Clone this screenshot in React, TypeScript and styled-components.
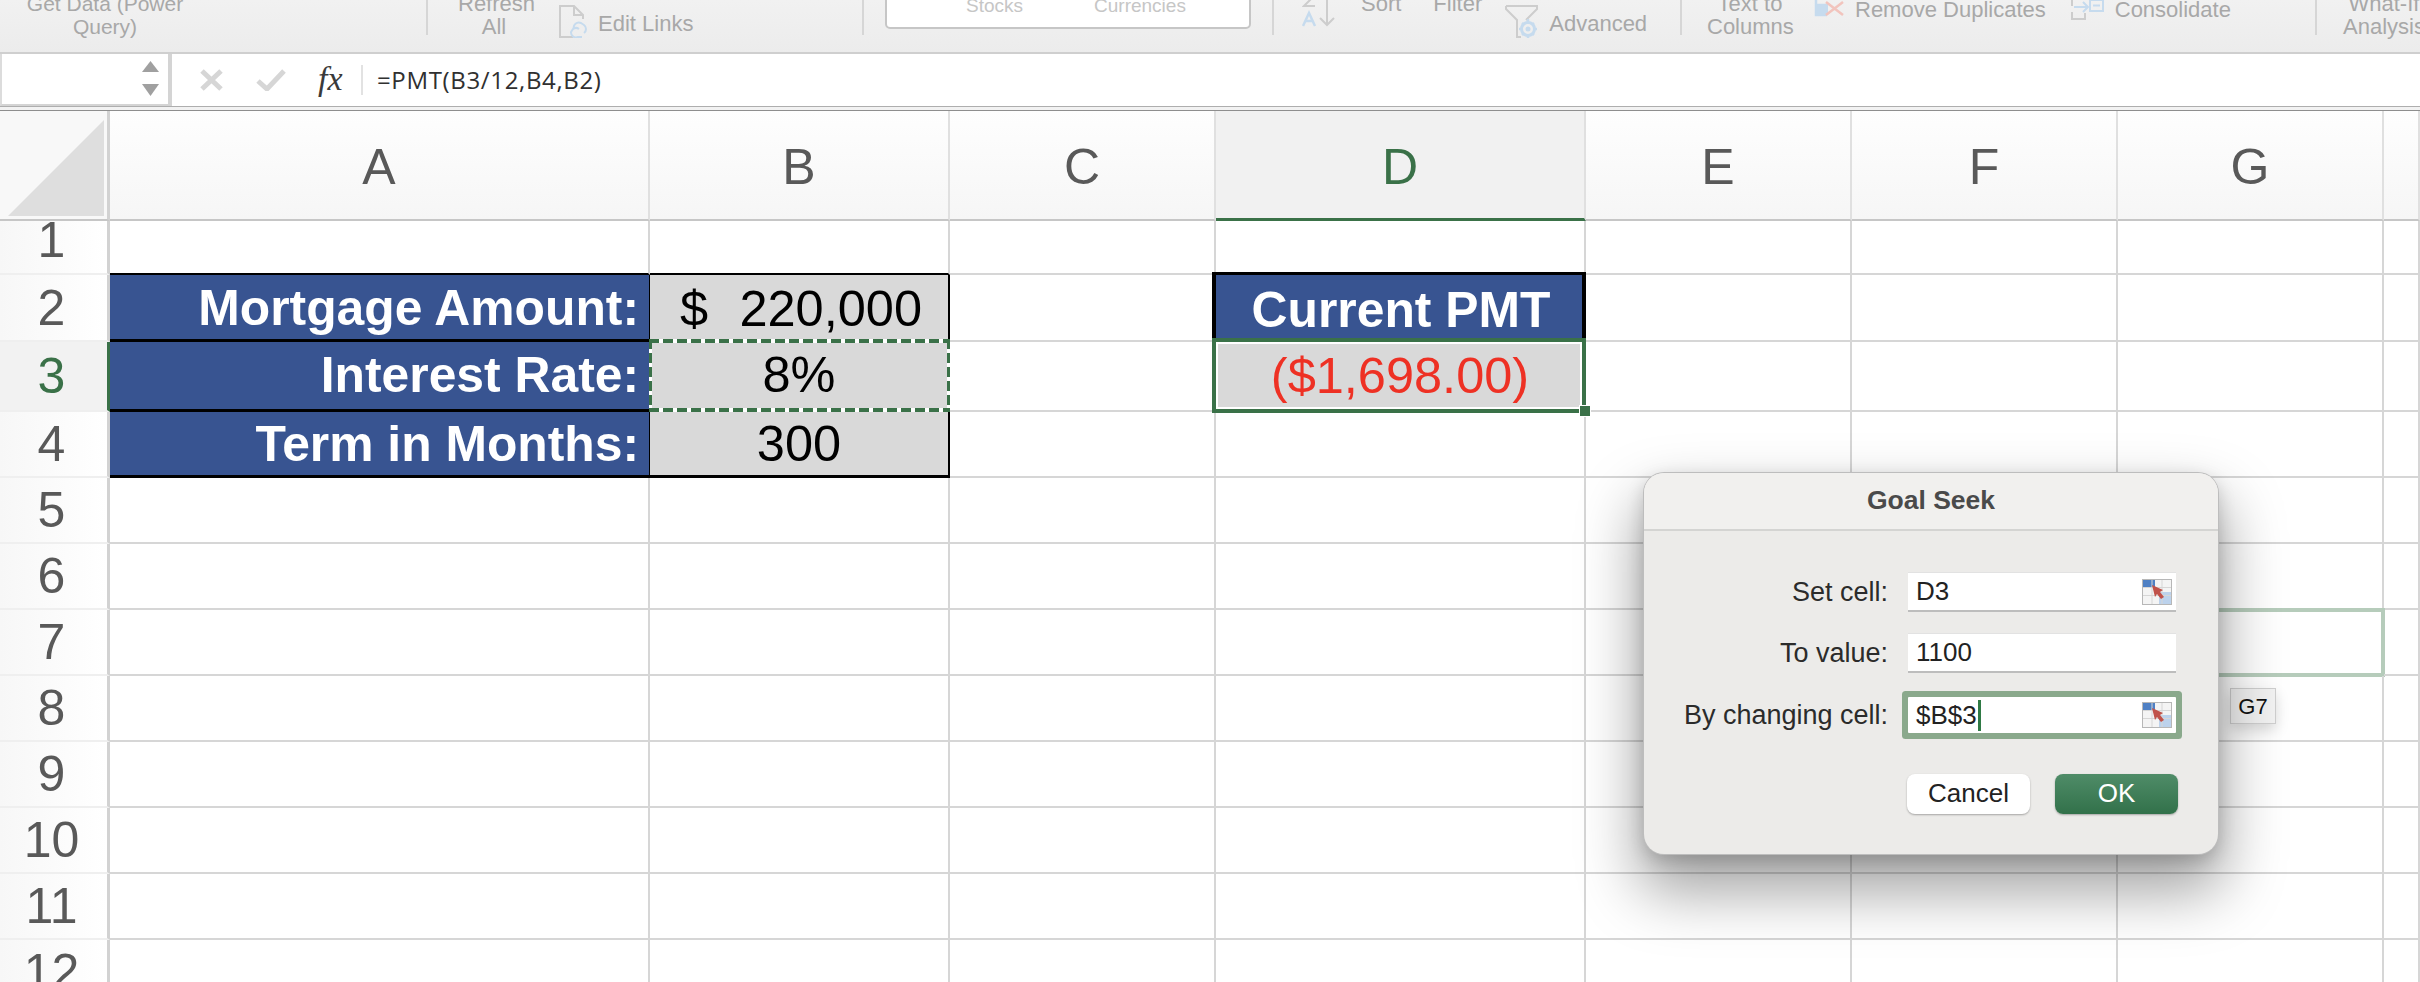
import React from "react";
import styled, { createGlobalStyle } from "styled-components";

const Global = createGlobalStyle`
  html, body { margin: 0; padding: 0; background: #fff; }
  body { font-family: "Liberation Sans", Arial, sans-serif; }
  * { box-sizing: border-box; }
`;

const Page = styled.div`
  position: relative;
  width: 2420px;
  height: 982px;
  overflow: hidden;
  background: #fff;
`;

/* ---------- Ribbon ---------- */
const Ribbon = styled.div`
  height: 54px;
  padding-bottom: 17px;
  display: grid;
  grid-template-columns: 428px 436px 410px 408px 635px 1fr;
  grid-template-rows: 35px;
  overflow: hidden;
  background: linear-gradient(#f1f1f1, #ececec);
  border-bottom: 2px solid #cfcfcf;
`;

const RibbonGroup = styled.div<{ $pad: number; $last?: boolean }>`
  display: flex;
  align-items: flex-end;
  height: 35px;
  padding-left: ${(p) => p.$pad}px;
  border-right: ${(p) => (p.$last ? "none" : "2px solid #d6d6d6")};
  min-width: 0;
`;

const RibbonLabel = styled.div<{ $lift?: number; $ml?: number; $w?: number; $size?: number }>`
  flex: none;
  width: ${(p) => (p.$w ? `${p.$w}px` : "auto")};
  margin-left: ${(p) => p.$ml ?? 0}px;
  margin-bottom: ${(p) => p.$lift ?? 0}px;
  font-size: ${(p) => p.$size ?? 22}px;
  line-height: 23px;
  color: #a8a8a8;
  text-align: center;
  white-space: pre;
`;

const RibbonIcon = styled.svg<{ $lift?: number; $ml?: number }>`
  flex: none;
  display: block;
  margin-left: ${(p) => p.$ml ?? 0}px;
  margin-bottom: ${(p) => p.$lift ?? 0}px;
`;

const DataTypes = styled.div`
  flex: none;
  width: 366px;
  height: 60px;
  margin-bottom: 6px;
  padding: 0 0 10px 0;
  display: flex;
  align-items: flex-end;
  background: #fff;
  border: 2px solid #c6c6c6;
  border-radius: 5px;
`;

const DataTypeName = styled.span<{ $ml?: number }>`
  margin-left: ${(p) => p.$ml ?? 0}px;
  font-size: 19px;
  line-height: 22px;
  color: #c6c6c6;
`;

/* ---------- Formula bar ---------- */
const FormulaBar = styled.div`
  height: 52px;
  display: flex;
  align-items: stretch;
  background: #fff;
`;

const NameBox = styled.div`
  width: 172px;
  flex: none;
  display: flex;
  justify-content: flex-end;
  align-items: center;
  padding-right: 9px;
  border-left: 2px solid #dcdcdc;
  border-right: 4px solid #d4d4d4;
  border-bottom: 2px solid #d4d4d4;
`;

const FormulaTools = styled.div`
  display: flex;
  align-items: center;
  flex: none;
  padding-left: 28px;
`;

const CheckIcon = styled.svg`
  display: block;
  margin-left: 33px;
`;

const Fx = styled.span`
  font-family: "Liberation Serif", serif;
  font-style: italic;
  font-size: 34px;
  color: #3a3a3a;
  margin-left: 32px;
  width: 45px;
  height: 30px;
  line-height: 28px;
  border-right: 2px solid #e2e2e2;
`;

const FormulaText = styled.div`
  margin-left: 14px;
  align-self: center;
  font-family: "Open Sans", sans-serif;
  font-size: 24px;
  letter-spacing: 0.65px;
  color: #303030;
  line-height: 30px;
`;

const BarEdge = styled.div`
  height: 5px;
  background: #f2f2f2;
  border-top: 1px solid #aeaeae;
  border-bottom: 1px solid #8e8e8e;
`;

/* ---------- Sheet ---------- */
const Sheet = styled.div`
  display: grid;
  grid-template-columns: 110px 540px 300px 266px 370px 266px 266px 266px 1fr;
  grid-template-rows: 110px 54px 67px 70px 66px 66px 66px 66px 66px 66px 66px 66px 66px;
`;

const Corner = styled.div`
  background: #f8f8f8;
  border-right: 3px solid #d2d2d2;
  border-bottom: 2px solid #c6c6c6;
`;

const CornerMark = styled.svg`
  display: block;
  margin: 9px 0 0 8px;
`;

const ColHead = styled.div<{ $active?: boolean }>`
  display: flex;
  align-items: center;
  justify-content: center;
  padding-top: 4px;
  font-size: 50px;
  color: ${(p) => (p.$active ? "#3a7148" : "#595959")};
  background: ${(p) => (p.$active ? "#f1f1f1" : "linear-gradient(#fefefe, #f6f6f6)")};
  border-right: 2px solid #e0e0e0;
  border-bottom: ${(p) => (p.$active ? "3px solid #3a7148" : "2px solid #c6c6c6")};
`;

const RowHead = styled.div<{ $active?: boolean; $up?: number }>`
  display: flex;
  align-items: center;
  justify-content: center;
  padding-bottom: ${(p) => p.$up ?? 0}px;
  padding-right: 4px;
  font-size: 50px;
  color: ${(p) => (p.$active ? "#3a7148" : "#595959")};
  background: ${(p) => (p.$active ? "#f2f2f2" : "linear-gradient(90deg, #f7f7f7, #ffffff)")};
  border-right: 3px solid ${(p) => (p.$active ? "#3a7148" : "#d2d2d2")};
  border-bottom: 2px solid #efefef;
`;

const Cell = styled.div<{ $edge?: "black" }>`
  position: relative;
  border-right: 2px solid #d6d6d6;
  border-bottom: 2px solid ${(p) => (p.$edge ? "#000" : "#d6d6d6")};
`;

const Banner = styled.div<{ $align?: "center" | "right"; $dy?: number }>`
  display: flex;
  align-items: center;
  justify-content: ${(p) => (p.$align === "center" ? "center" : "flex-end")};
  padding-right: ${(p) => (p.$align === "center" ? 0 : 10)}px;
  padding-top: ${(p) => Math.max(p.$dy ?? 0, 0)}px;
  padding-bottom: ${(p) => Math.max(-(p.$dy ?? 0), 0)}px;
  background: #385491;
  color: #fff;
  font-weight: 700;
  font-size: 49.8px;
  border-right: 1px solid #000;
  border-bottom: 3px solid #000;
  white-space: nowrap;
`;

const HeadBanner = styled(Banner)`
  position: relative;
  z-index: 1;
  border: none;
  box-shadow: inset -4px 0 #000, -4px 0 #000, -4px -3px #000, 0 -3px #000;
`;

const Value = styled.div<{ $spread?: boolean; $dy?: number }>`
  position: relative;
  display: flex;
  align-items: center;
  justify-content: ${(p) => (p.$spread ? "space-between" : "center")};
  padding-left: ${(p) => (p.$spread ? 30 : 0)}px;
  padding-right: ${(p) => (p.$spread ? 26 : 0)}px;
  padding-top: ${(p) => Math.max(p.$dy ?? 0, 0)}px;
  padding-bottom: ${(p) => Math.max(-(p.$dy ?? 0), 0)}px;
  background: #d9d9d9;
  color: #000;
  font-size: 50.5px;
  border-right: 2px solid #000;
  border-bottom: 3px solid #000;
`;

const MarchingAnts = styled.div`
  position: absolute;
  inset: -3px -2px -3px -1px;
  pointer-events: none;
  background:
    repeating-linear-gradient(90deg, #3a7148 0 10px, #fff 10px 14px) top / 100% 4px no-repeat,
    repeating-linear-gradient(90deg, #3a7148 0 10px, #fff 10px 14px) bottom / 100% 4px no-repeat,
    repeating-linear-gradient(#3a7148 0 10px, #fff 10px 14px) left / 3px 100% no-repeat,
    repeating-linear-gradient(#3a7148 0 10px, #fff 10px 14px) right / 3px 100% no-repeat;
`;

const ResultValue = styled(Value)`
  color: #ee3124;
  border: none;
  border-bottom: 2px solid #d6d6d6;
  border-right: 2px solid #d6d6d6;
`;

const Selection = styled.div`
  position: absolute;
  z-index: 2;
  inset: -4px -2px -3px -4px;
  border: 4px solid #3a7148;
  box-shadow: inset 0 0 0 2px #fff;
  pointer-events: none;
`;

const FillHandle = styled.div`
  position: absolute;
  right: -8px;
  bottom: -7px;
  width: 10px;
  height: 10px;
  background: #3a7148;
  outline: 1px solid #fff;
`;

const FadedSelection = styled.div`
  position: absolute;
  inset: -2px -3px -3px -2px;
  border: 4px solid #b6ccbb;
`;

/* ---------- Tag ---------- */
const CellTag = styled.div`
  position: absolute;
  left: 2230px;
  top: 688px;
  width: 46px;
  height: 36px;
  padding-top: 2px;
  display: flex;
  align-items: center;
  justify-content: center;
  background: #f2f2f2;
  border: 1px solid #cfcfcf;
  font-size: 22px;
  color: #111;
  box-shadow: 0 6px 14px rgba(0, 0, 0, 0.15);
`;

/* ---------- Dialog ---------- */
const Dialog = styled.div`
  position: absolute;
  left: 1644px;
  top: 473px;
  width: 574px;
  height: 381px;
  display: flex;
  flex-direction: column;
  background: #ecebe9;
  border-radius: 20px;
  box-shadow: 0 0 0 1px #bdbdbd, 0 32px 60px 6px rgba(0, 0, 0, 0.36), 0 6px 18px rgba(0, 0, 0, 0.18);
`;

const TitleBar = styled.div`
  height: 58px;
  flex: none;
  display: flex;
  align-items: center;
  justify-content: center;
  padding-bottom: 2px;
  background: #f1f0ee;
  border-bottom: 2px solid #d4d4d2;
  border-radius: 20px 20px 0 0;
  font-size: 26.5px;
  font-weight: 700;
  color: #4a4a4a;
`;

const Form = styled.div`
  display: flex;
  flex-direction: column;
  padding: 41px 42px 0 0;
`;

const Field = styled.div<{ $mt?: number }>`
  display: grid;
  grid-template-columns: 244px 268px;
  column-gap: 20px;
  align-items: center;
  margin-top: ${(p) => p.$mt ?? 0}px;
`;

const FieldLabel = styled.label`
  text-align: right;
  font-size: 27px;
  color: #2b2b2b;
  white-space: nowrap;
`;

const Input = styled.div<{ $focus?: boolean }>`
  height: ${(p) => (p.$focus ? 36 : 40)}px;
  display: flex;
  align-items: center;
  justify-content: space-between;
  padding: 0 4px 0 8px;
  background: #fff;
  font-size: 26px;
  color: #222;
  border-top: ${(p) => (p.$focus ? "none" : "1px solid #e2e2e2")};
  border-bottom: ${(p) => (p.$focus ? "none" : "2px solid #bdbdbd")};
  box-shadow: ${(p) => (p.$focus ? "0 0 0 6px #8aa98c" : "none")};
  border-radius: ${(p) => (p.$focus ? 1 : 0)}px;
`;

const InputValue = styled.span`
  display: inline-flex;
  align-items: center;
`;

const Caret = styled.span`
  display: inline-block;
  width: 3px;
  height: 31px;
  margin-left: 1px;
  background: #2f7a45;
`;

const Actions = styled.div`
  display: flex;
  justify-content: flex-end;
  gap: 25px;
  margin-top: 41px;
  padding-right: 40px;
`;

const Button = styled.button<{ $primary?: boolean }>`
  width: 123px;
  height: 40px;
  padding: 0 0 2px;
  border: none;
  border-radius: 8px;
  font-family: inherit;
  font-size: 26px;
  color: ${(p) => (p.$primary ? "#fff" : "#222")};
  background: ${(p) => (p.$primary ? "linear-gradient(#4f8c68, #32714a)" : "#fff")};
  box-shadow: 0 1px 2px rgba(0, 0, 0, 0.3);
`;

const RefIcon = () => (
  <svg width="30" height="26" viewBox="0 0 30 26">
    <rect x="0" y="0" width="30" height="26" fill="#b7b7b7" />
    <rect x="1" y="1" width="28" height="24" fill="#f4f4f4" />
    <rect x="1" y="1" width="12" height="7" fill="#4f80c4" />
    <rect x="17" y="13" width="12" height="12" fill="#bcd2ec" />
    <path d="M1 8.5H29M1 16.5H29M10 1V25M20 1V25" stroke="#d6d6d6" strokeWidth="1" />
    <path d="M10 6L21 11L18 13L22 18L19 20L15 15L13 18Z" fill="#c0524a" />
  </svg>
);

const grid = (n: number, active?: number) =>
  Array.from({ length: n }, (_, i) => i === active);

const rows = [5, 6, 7, 8, 9, 10, 11, 12];

export default function App() {
  return (
    <Page>
      <Global />
      <Ribbon>
        <RibbonGroup $pad={24}>
          <RibbonLabel $lift={-3} $w={162} $size={21}>{"Get Data (Power\nQuery)"}</RibbonLabel>
        </RibbonGroup>
        <RibbonGroup $pad={30}>
          <RibbonLabel $lift={-3} $w={72}>{"Refresh\nAll"}</RibbonLabel>
          <RibbonIcon $ml={29} $lift={-3} width="29" height="33" viewBox="0 0 29 33" fill="none">
            <path d="M14 32H1V1H15L24 10V14M15 1V10H24" stroke="#cdcdcd" strokeWidth="2" />
            <path d="M15 24a5 5 0 0 1 7-6l3 2a5 5 0 0 1 0 8M20 24a5 5 0 0 0-6 0l-2 3a5 5 0 0 0 7 5h4" stroke="#c6dbee" strokeWidth="2" />
          </RibbonIcon>
          <RibbonLabel $ml={10} $lift={0}>Edit Links</RibbonLabel>
        </RibbonGroup>
        <RibbonGroup $pad={21}>
          <DataTypes>
            <DataTypeName $ml={79}>Stocks</DataTypeName>
            <DataTypeName $ml={71}>Currencies</DataTypeName>
          </DataTypes>
        </RibbonGroup>
        <RibbonGroup $pad={28}>
          <RibbonIcon $lift={8} width="33" height="40" viewBox="0 0 33 40" fill="none">
            <path d="M2 8H13L2 19H13" stroke="#cdcdcd" strokeWidth="2" />
            <path d="M1 39L7 26L13 39M3 34H11" stroke="#c6dbee" strokeWidth="2.5" />
            <path d="M25 4V38M18 31L25 38L32 31" stroke="#cdcdcd" strokeWidth="2" />
          </RibbonIcon>
          <RibbonLabel $ml={26} $lift={20}>Sort</RibbonLabel>
          <RibbonLabel $ml={32} $lift={20}>Filter</RibbonLabel>
          <RibbonIcon $ml={23} $lift={-3} width="33" height="33" viewBox="0 0 33 33" fill="none">
            <path d="M1 1H32V4L21 15M1 1V4L12 15V32H16" stroke="#cdcdcd" strokeWidth="2" />
            <circle cx="23" cy="24" r="6.5" stroke="#c6dbee" strokeWidth="3" />
            <circle cx="23" cy="24" r="2.5" fill="#c6dbee" />
            <path d="M23 14V17M23 31V34M14 24H17M29 24H32M17 18L19 20M27 28L29 30M29 18L27 20M19 28L17 30" stroke="#c6dbee" strokeWidth="2.5" />
          </RibbonIcon>
          <RibbonLabel $ml={11} $lift={0}>Advanced</RibbonLabel>
        </RibbonGroup>
        <RibbonGroup $pad={25}>
          <RibbonLabel $lift={-3} $w={86}>{"Text to\nColumns"}</RibbonLabel>
          <RibbonIcon $ml={21} $lift={10} width="30" height="34" viewBox="0 0 30 34" fill="none">
            <path d="M2 0V24H13M24 0V6H2M2 14H14" stroke="#c6dbee" strokeWidth="2.5" />
            <rect x="2" y="14" width="12" height="10" fill="#c6dbee" />
            <path d="M12 11L29 24M29 11L12 24" stroke="#f2c4bd" strokeWidth="2.5" />
          </RibbonIcon>
          <RibbonLabel $ml={11} $lift={14}>Remove Duplicates</RibbonLabel>
          <RibbonIcon $ml={25} $lift={15} width="33" height="22" viewBox="0 0 33 22" fill="none">
            <path d="M1 0H11M1 8V0M1 14V21H14V15" stroke="#cdcdcd" strokeWidth="2" />
            <path d="M3 9H17M12 4L17 9L12 14" stroke="#c6dbee" strokeWidth="2" />
            <rect x="19" y="2" width="13" height="11" stroke="#c6dbee" strokeWidth="2" />
            <path d="M22 7.5H29" stroke="#c6dbee" strokeWidth="2" />
          </RibbonIcon>
          <RibbonLabel $ml={11} $lift={14}>Consolidate</RibbonLabel>
        </RibbonGroup>
        <RibbonGroup $pad={26} $last>
          <RibbonLabel $lift={-3}>{"What-If\nAnalysis"}</RibbonLabel>
        </RibbonGroup>
      </Ribbon>

      <FormulaBar>
        <NameBox>
          <svg width="17" height="36" viewBox="0 0 17 36">
            <path d="M8.5 0L17 11H0Z" fill="#a0a0a0" />
            <path d="M0 23H17L8.5 35Z" fill="#a0a0a0" />
          </svg>
        </NameBox>
        <FormulaTools>
          <svg width="23" height="22" viewBox="0 0 23 22" fill="none">
            <path d="M2 2L21 20M21 2L2 20" stroke="#d6d6d6" strokeWidth="5" />
          </svg>
          <CheckIcon width="30" height="22" viewBox="0 0 30 22" fill="none">
            <path d="M2 12L11 20L28 2" stroke="#d6d6d6" strokeWidth="5" />
          </CheckIcon>
          <Fx>fx</Fx>
        </FormulaTools>
        <FormulaText>=PMT(B3/12,B4,B2)</FormulaText>
      </FormulaBar>
      <BarEdge />

      <Sheet>
        <Corner>
          <CornerMark width="96" height="96" viewBox="0 0 96 96">
            <path d="M96 0V96H0Z" fill="#dedede" />
          </CornerMark>
        </Corner>
        {["A", "B", "C", "D", "E", "F", "G", "H"].map((c) => (
          <ColHead key={c} $active={c === "D"}>{c === "H" ? "" : c}</ColHead>
        ))}

        <RowHead $up={14}>1</RowHead>
        <Cell $edge="black" />
        <Cell $edge="black" />
        <Cell />
        <Cell />
        <Cell />
        <Cell />
        <Cell />
        <Cell />

        <RowHead>2</RowHead>
        <Banner $dy={2}>Mortgage Amount:</Banner>
        <Value $spread $dy={2}>
          <span>$</span>
          <span>220,000</span>
        </Value>
        <Cell />
        <HeadBanner $align="center" $dy={2}>Current PMT</HeadBanner>
        <Cell />
        <Cell />
        <Cell />
        <Cell />

        <RowHead $active>3</RowHead>
        <Banner $dy={-2}>Interest Rate:</Banner>
        <Value $dy={-2}>
          8%
          <MarchingAnts />
        </Value>
        <Cell />
        <ResultValue $dy={-2}>
          ($1,698.00)
          <Selection>
            <FillHandle />
          </Selection>
        </ResultValue>
        <Cell />
        <Cell />
        <Cell />
        <Cell />

        <RowHead>4</RowHead>
        <Banner>Term in Months:</Banner>
        <Value>300</Value>
        <Cell />
        <Cell />
        <Cell />
        <Cell />
        <Cell />
        <Cell />

        {rows.map((r) => (
          <React.Fragment key={r}>
            <RowHead>{r}</RowHead>
            {grid(8, r === 7 ? 6 : undefined).map((on, i) => (
              <Cell key={i}>{on && <FadedSelection />}</Cell>
            ))}
          </React.Fragment>
        ))}
      </Sheet>

      <CellTag>G7</CellTag>

      <Dialog>
        <TitleBar>Goal Seek</TitleBar>
        <Form>
          <Field>
            <FieldLabel>Set cell:</FieldLabel>
            <Input>
              <InputValue>D3</InputValue>
              <RefIcon />
            </Input>
          </Field>
          <Field $mt={21}>
            <FieldLabel>To value:</FieldLabel>
            <Input>
              <InputValue>1100</InputValue>
            </Input>
          </Field>
          <Field $mt={24}>
            <FieldLabel>By changing cell:</FieldLabel>
            <Input $focus>
              <InputValue>
                $B$3
                <Caret />
              </InputValue>
              <RefIcon />
            </Input>
          </Field>
        </Form>
        <Actions>
          <Button>Cancel</Button>
          <Button $primary>OK</Button>
        </Actions>
      </Dialog>
    </Page>
  );
}
